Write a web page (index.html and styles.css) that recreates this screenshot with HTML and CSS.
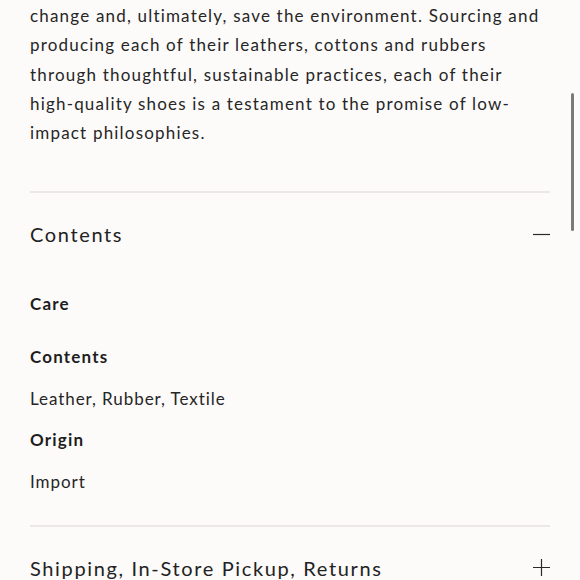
FILE: index.html
```html
<!DOCTYPE html>
<html lang="en">
<head>
<meta charset="utf-8">
<title>Product details</title>
<link rel="stylesheet" href="styles.css">
</head>
<body>
<main class="page">
  <p class="desc">change and, ultimately, save the environment. Sourcing and producing each of their leathers, cottons and rubbers through thoughtful, sustainable practices, each of their high-quality shoes is a testament to the promise of low-impact philosophies.</p>

  <section class="acc open">
    <div class="acc-head">
      <h2 class="acc-title">Contents</h2>
      <svg class="acc-icon" width="17" height="17" viewBox="0 0 17 17"><path d="M0 8.5H17" stroke="#2a2a2a" stroke-width="1.2"/></svg>
    </div>
    <dl class="acc-body">
      <dt class="label care">Care</dt>
      <dt class="label">Contents</dt>
      <dd class="value">Leather, Rubber, Textile</dd>
      <dt class="label">Origin</dt>
      <dd class="value">Import</dd>
    </dl>
  </section>

  <section class="acc">
    <div class="acc-head">
      <h2 class="acc-title">Shipping, In-Store Pickup, Returns</h2>
      <svg class="acc-icon" width="17" height="17" viewBox="0 0 17 17"><path d="M0 8.5H17M8.5 0V17" stroke="#2a2a2a" stroke-width="1.2"/></svg>
    </div>
  </section>
</main>
<div class="scrollbar"></div>
</body>
</html>
```

FILE: styles.css
```css
html, body {
  margin: 0;
  background: #fdfbfa;
}
body {
  font-family: "Lato", "Liberation Sans", sans-serif;
  color: #262626;
  overflow: hidden;
  height: 580px;
}
.page {
  padding: 1px 30px 0;
}
.desc {
  margin: 0;
  font-size: 17px;
  line-height: 29.3px;
  letter-spacing: 0.07em;
  color: #262626;
}
.acc {
  border-top: 2px solid #ebe8e6;
}
.acc:first-of-type {
  margin-top: 44px;
}
.acc-head {
  display: flex;
  align-items: center;
  justify-content: space-between;
  padding: 27px 0 0;
  height: 28px;
}
.acc-title {
  margin: 0;
  font-size: 20px;
  font-weight: 400;
  letter-spacing: 0.082em;
  line-height: 28px;
  color: #222;
}
.acc-icon {
  display: block;
}
.acc-body {
  margin: 44px 0 0;
  padding-bottom: 31px;
}
.label {
  font-size: 17px;
  font-weight: 700;
  letter-spacing: 0.07em;
  line-height: 24px;
  color: #1e1e1e;
  margin: 0 0 17.5px;
}
.label.care {
  margin-bottom: 29px;
}
.value {
  margin: 0 0 17.5px;
  font-size: 17px;
  letter-spacing: 0.055em;
  line-height: 24px;
  color: #262626;
}
.value:last-child {
  margin-bottom: 0;
}
.scrollbar {
  position: fixed;
  right: 6px;
  top: 93px;
  width: 3px;
  height: 138px;
  border-radius: 2px;
  background: #7a7a7a;
}
```
